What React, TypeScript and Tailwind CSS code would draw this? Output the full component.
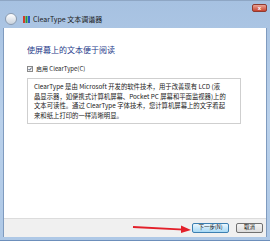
import React from 'react';

const cjk = { fontFamily: '"Noto Sans CJK SC", "Liberation Sans", sans-serif' };

function BackButton() {
  return (
    <div className="w-[12px] h-[12px] rounded-full border border-[#8a9bb0] bg-gradient-to-b from-[#ffffff] to-[#c9d3de] flex items-center justify-center">
      <div className="w-[6px] h-[6px] rounded-full bg-gradient-to-b from-[#f4f6f8] to-[#d4dbe3]" />
    </div>
  );
}

function AppIcon() {
  return (
    <svg width="7" height="7" viewBox="0 0 7 7">
      <rect x="0" y="0" width="2" height="7" fill="#d23a2a" />
      <rect x="2.5" y="0" width="2" height="7" fill="#2a9a3a" />
      <rect x="5" y="0" width="2" height="7" fill="#2a55c8" />
    </svg>
  );
}

function CloseButton() {
  return (
    <div className="w-[15px] h-[8px] rounded-[2px] border border-[#8f3a30] bg-gradient-to-b from-[#e8a396] to-[#c7422f] flex items-center justify-center">
      <span className="text-[6px] leading-none text-white font-bold" style={{ fontFamily: '"Liberation Sans", sans-serif' }}>x</span>
    </div>
  );
}

function CheckBox() {
  return (
    <svg width="6" height="6" viewBox="0 0 6 6">
      <rect x="0.5" y="0.5" width="5" height="5" fill="#f4f4f4" stroke="#8a8a8a" strokeWidth="1" />
      <path d="M1.5 3 L2.6 4.2 L4.6 1.6" fill="none" stroke="#3a4a6a" strokeWidth="0.9" />
    </svg>
  );
}

export default function App() {
  return (
    <div className="w-[270px] h-[241px] bg-gradient-to-b from-[#a6c1e1] via-[#bad1eb] to-[#aec8e6] flex flex-col relative overflow-hidden" style={cjk}>
      <div className="h-[28px] flex justify-between items-start pl-[5px] pr-[3px] border-t border-[#8ea6c4]">
        <div className="flex items-center gap-[3px] pt-[12px]">
          <BackButton />
          <div className="ml-[3px] flex items-center gap-[3px]">
            <AppIcon />
            <span className="text-[7px] leading-none text-[#1b1b1b]">ClearType 文本调谐器</span>
          </div>
        </div>
        <div className="pt-[3px]">
          <CloseButton />
        </div>
      </div>

      <div className="flex-1 mx-[3px] border-x border-[#7f9bbf] bg-white flex flex-col">
        <div className="flex-1 pl-[23px] pt-[17px]">
          <div className="text-[8px] leading-[10px] text-[#1e3a8a]">使屏幕上的文本便于阅读</div>
          <div className="mt-[11px] flex items-center gap-[3px]">
            <CheckBox />
            <span className="text-[6px] leading-none text-[#222]">启用 ClearType(C)</span>
          </div>
          <div className="mt-[6px] w-[214px] h-[46px] border border-[#cfcfcf] pl-[6px] pt-[3px] text-[6.35px] leading-[9.6px] text-[#1a1a1a]">
            <div className="whitespace-nowrap">ClearType 是由 Microsoft 开发的软件技术，用于改善现有 LCD (液</div>
            <div className="whitespace-nowrap">晶显示器，如便携式计算机屏幕、Pocket PC 屏幕和平面监视器)上的</div>
            <div className="whitespace-nowrap">文本可读性。通过 ClearType 字体技术，您计算机屏幕上的文字看起</div>
            <div className="whitespace-nowrap">来和纸上打印的一样清晰明显。</div>
          </div>
        </div>
        <div className="h-[19px] bg-[#f0f0f0] border-t border-[#dcdcdc] flex items-center justify-end gap-[7px] pr-[3px]">
          <div className="w-[37px] h-[10px] rounded-[2px] border border-[#3c7fb1] bg-gradient-to-b from-[#eaf6fd] to-[#a7d9f5] flex items-center justify-center">
            <span className="text-[5.5px] leading-none text-[#111]">下一步(N)</span>
          </div>
          <div className="w-[27px] h-[10px] rounded-[2px] border border-[#707070] bg-gradient-to-b from-[#f4f4f4] to-[#dcdcdc] flex items-center justify-center">
            <span className="text-[5.5px] leading-none text-[#111]">取消</span>
          </div>
        </div>
      </div>
      <div className="h-[4px] border-b border-[#6d8fbb]" />

      <svg className="absolute left-[130px] top-[222px]" width="64" height="12" viewBox="0 0 64 12">
        <line x1="3" y1="5" x2="54" y2="7.6" stroke="#e3202a" strokeWidth="1.8" />
        <polygon points="61,8 51,3.6 51,11" fill="#e3202a" />
      </svg>
    </div>
  );
}
